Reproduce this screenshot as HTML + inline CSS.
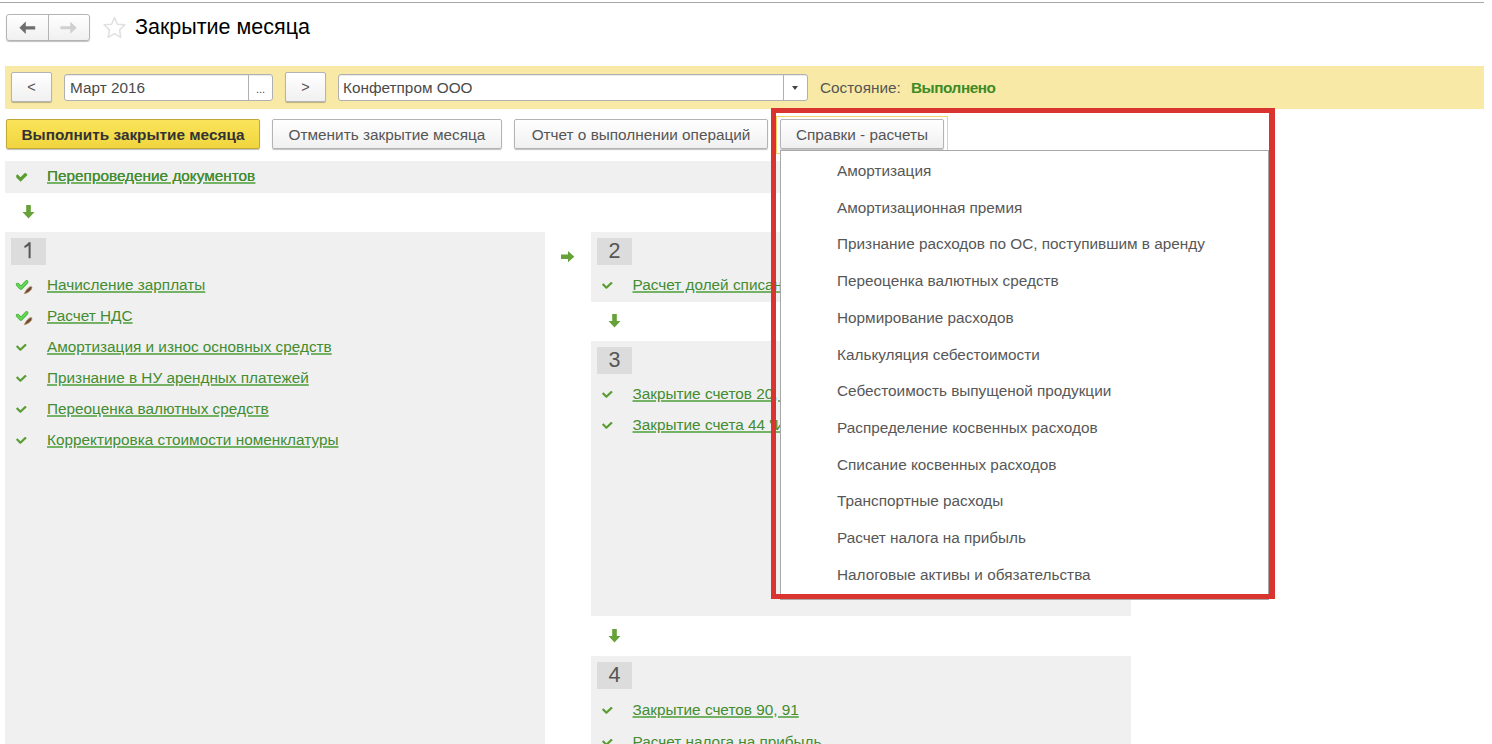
<!DOCTYPE html>
<html><head><meta charset="utf-8">
<style>
*{margin:0;padding:0;box-sizing:border-box}
html,body{width:1492px;height:744px;overflow:hidden;background:#fff}
body{position:relative;font-family:"Liberation Sans",sans-serif;font-size:15.33px;color:#555}
.a{position:absolute}
.t{position:absolute;white-space:nowrap;line-height:20px;height:20px}
.btn{position:absolute;border:1px solid #b4b4b4;border-radius:2px;background:linear-gradient(#ffffff,#f0f0f0);box-shadow:0 1px 1px rgba(0,0,0,.25)}
.fld{position:absolute;background:#fff;border:1px solid #b0b0b0;border-radius:3px;box-shadow:inset 0 1px 0 rgba(0,0,0,.08)}
.panel{position:absolute;background:#f0f0f0}
.num{position:absolute;width:35px;height:27px;background:#dcdcdc;color:#555;font-size:21.5px;line-height:27px;text-align:center}
.lnk{color:#438c30;text-decoration:underline;text-decoration-color:#74b266;text-decoration-thickness:2px;text-underline-offset:1px}
.mi{position:absolute;left:837px;color:#575757;white-space:nowrap;line-height:20px}
</style></head><body>

<!-- top line -->
<div class="a" style="left:0;top:2px;width:1484px;height:1px;background:#a6a6a6"></div>

<!-- nav buttons -->
<div class="btn" style="left:6px;top:14px;width:84px;height:27px;border-radius:3px"></div>
<div class="a" style="left:48px;top:14px;width:1px;height:27px;background:#b4b4b4"></div>
<svg class="a" style="left:19px;top:21px" width="17" height="14" viewBox="0 0 17 14"><path d="M0.4 6.7 L6.8 0.4 V5.2 H16.2 V8.4 H6.8 V12.9 Z" fill="#6e6e6e"/></svg>
<svg class="a" style="left:60px;top:21px" width="17" height="14" viewBox="0 0 17 14"><path d="M16.7 6.7 L10.3 0.7 V5.3 H0.4 V8.3 H10.3 V12.75 Z" fill="#cfcfcf"/></svg>
<svg class="a" style="left:100px;top:13px" width="30" height="30" viewBox="0 0 30 30"><path d="M14.5 4.6 L17.4 11.3 L24.9 11.8 L19.6 16.9 L20.8 24.3 L14.5 20.6 L8.2 24.3 L9.4 16.9 L4.1 11.8 L11.6 11.3 Z" fill="none" stroke="#e0e0e0" stroke-width="1.5" stroke-linejoin="round"/></svg>
<div class="t" style="left:135px;top:14px;font-size:21.5px;line-height:26px;height:26px;color:#000">Закрытие месяца</div>

<!-- yellow bar -->
<div class="a" style="left:5px;top:66px;width:1479px;height:43px;background:#f8eaa6"></div>
<div class="btn" style="left:11px;top:72px;width:41px;height:30px"></div>
<div class="t" style="left:11px;top:77px;width:41px;text-align:center;color:#555;font-size:14.5px">&lt;</div>
<div class="fld" style="left:64px;top:74px;width:209px;height:27px"></div>
<div class="a" style="left:248px;top:75px;width:1px;height:25px;background:#b0b0b0"></div>
<div class="t" style="left:70px;top:78px;color:#4a4a4a">Март 2016</div>
<div class="t" style="left:249px;top:79px;width:23px;text-align:center;color:#444;font-size:11px">...</div>
<div class="btn" style="left:285px;top:72px;width:41px;height:30px"></div>
<div class="t" style="left:285px;top:77px;width:41px;text-align:center;color:#555;font-size:14.5px">&gt;</div>
<div class="fld" style="left:338px;top:74px;width:470px;height:27px"></div>
<div class="a" style="left:783px;top:75px;width:1px;height:25px;background:#b0b0b0"></div>
<div class="t" style="left:343px;top:78px;color:#4a4a4a">Конфетпром ООО</div>
<div class="a" style="left:792px;top:86px;width:0;height:0;border-left:3.5px solid transparent;border-right:3.5px solid transparent;border-top:4px solid #444"></div>
<div class="t" style="left:820px;top:78px;color:#555">Состояние:</div>
<div class="t" style="left:911px;top:78px;color:#3e8a26;font-weight:bold;letter-spacing:-0.45px">Выполнено</div>

<!-- action buttons -->
<div class="a" style="left:6px;top:119px;width:254px;height:30px;border:1px solid #bfa73a;border-radius:2px;background:linear-gradient(#fae45a,#f0d53e);box-shadow:0 1px 1px rgba(0,0,0,.25)"></div>
<div class="t" style="left:6px;top:125px;width:254px;text-align:center;font-weight:bold;color:#333">Выполнить закрытие месяца</div>
<div class="btn" style="left:272px;top:119px;width:230px;height:30px"></div>
<div class="t" style="left:272px;top:125px;width:230px;text-align:center">Отменить закрытие месяца</div>
<div class="btn" style="left:514px;top:119px;width:254px;height:30px"></div>
<div class="t" style="left:514px;top:125px;width:254px;text-align:center">Отчет о выполнении операций</div>

<!-- band -->
<div class="panel" style="left:5px;top:161px;width:1126px;height:32px"></div>
<svg class="a" style="left:15px;top:171px" width="14" height="12" viewBox="0 0 14 12"><path d="M1.8 5.2 L5.6 9 L11.6 3" fill="none" stroke="#5a9e32" stroke-width="2.6"/></svg>
<div class="t" style="left:47px;top:166px"><span class="lnk">Перепроведение документов</span></div>

<svg class="a" style="left:22px;top:205px" width="13" height="14" viewBox="0 0 13 14"><path d="M4.2 0 H8.8 V7 H12.5 L6.5 13.5 L0.5 7 H4.2 Z" fill="#66a13a"/></svg>

<!-- panel 1 -->
<div class="panel" style="left:5px;top:232px;width:540px;height:520px"></div>
<div class="num" style="left:11px;top:238px"><svg style="position:absolute;left:0;top:0" width="35" height="27" viewBox="0 0 35 27"><path d="M17.6 4.2 H19.6 V20.2 H17.6 V7.4 Q15.9 8.9 13.4 9.9 V7.9 Q16.3 6.5 17.6 4.2 Z" fill="#555"/></svg></div>

<!-- panel 2 -->
<svg class="a" style="left:561.4px;top:251.3px" width="15" height="12" viewBox="0 0 15 12"><path d="M0 3.4 H7 V0 L13.3 5.65 L7 11.3 V7.9 H0 Z" fill="#66a13a"/></svg>
<div class="panel" style="left:591px;top:232px;width:540px;height:70px"></div>
<div class="num" style="left:597px;top:238px">2</div>

<svg class="a" style="left:608px;top:314px" width="13" height="14" viewBox="0 0 13 14"><path d="M4.2 0 H8.8 V7 H12.5 L6.5 13.5 L0.5 7 H4.2 Z" fill="#66a13a"/></svg>

<!-- panel 3 -->
<div class="panel" style="left:591px;top:341px;width:540px;height:275px"></div>
<div class="num" style="left:597px;top:347px">3</div>

<svg class="a" style="left:608px;top:629px" width="13" height="14" viewBox="0 0 13 14"><path d="M4.2 0 H8.8 V7 H12.5 L6.5 13.5 L0.5 7 H4.2 Z" fill="#66a13a"/></svg>

<!-- panel 4 -->
<div class="panel" style="left:591px;top:656px;width:540px;height:100px"></div>
<div class="num" style="left:597px;top:662px">4</div>

<svg class="a" style="left:15.0px;top:173px" width="13" height="10" viewBox="0 0 13 10"><path d="M1.7 1.9 L5.4 5.7 L11 0.4" fill="none" stroke="#5a9e32" stroke-width="2.2" stroke-linejoin="round"/></svg><div class="t" style="left:47px;top:166px"><span class="lnk">Перепроведение документов</span></div>
<svg class="a" style="left:15px;top:279px" width="19" height="16" viewBox="0 0 19 16"><path d="M2.6 5.6 L5.9 8.9 L11.6 2.9" fill="none" stroke="#3fb038" stroke-width="3.6" stroke-linecap="round" stroke-linejoin="round"/><path d="M2.6 5.6 L5.9 8.9 L11.6 2.9" fill="none" stroke="#66d856" stroke-width="2.1" stroke-linecap="round" stroke-linejoin="round"/><path d="M9.2 14.8 Q10.2 11.2 14.2 8.2 Q16.4 6.9 17.1 8.4 Q17 10.2 14.2 12.6 Q11.8 14.4 9.2 14.8 Z" fill="#6e4b2e" stroke="#b89066" stroke-width="0.7"/></svg><div class="t" style="left:47px;top:275px"><span class="lnk">Начисление зарплаты</span></div>
<svg class="a" style="left:15px;top:310px" width="19" height="16" viewBox="0 0 19 16"><path d="M2.6 5.6 L5.9 8.9 L11.6 2.9" fill="none" stroke="#3fb038" stroke-width="3.6" stroke-linecap="round" stroke-linejoin="round"/><path d="M2.6 5.6 L5.9 8.9 L11.6 2.9" fill="none" stroke="#66d856" stroke-width="2.1" stroke-linecap="round" stroke-linejoin="round"/><path d="M9.2 14.8 Q10.2 11.2 14.2 8.2 Q16.4 6.9 17.1 8.4 Q17 10.2 14.2 12.6 Q11.8 14.4 9.2 14.8 Z" fill="#6e4b2e" stroke="#b89066" stroke-width="0.7"/></svg><div class="t" style="left:47px;top:306px"><span class="lnk">Расчет НДС</span></div>
<svg class="a" style="left:15.0px;top:344px" width="13" height="10" viewBox="0 0 13 10"><path d="M1.7 1.9 L5.4 5.7 L11 0.4" fill="none" stroke="#5a9e32" stroke-width="2.2" stroke-linejoin="round"/></svg><div class="t" style="left:47px;top:337px"><span class="lnk">Амортизация и износ основных средств</span></div>
<svg class="a" style="left:15.0px;top:375px" width="13" height="10" viewBox="0 0 13 10"><path d="M1.7 1.9 L5.4 5.7 L11 0.4" fill="none" stroke="#5a9e32" stroke-width="2.2" stroke-linejoin="round"/></svg><div class="t" style="left:47px;top:368px"><span class="lnk">Признание в НУ арендных платежей</span></div>
<svg class="a" style="left:15.0px;top:406px" width="13" height="10" viewBox="0 0 13 10"><path d="M1.7 1.9 L5.4 5.7 L11 0.4" fill="none" stroke="#5a9e32" stroke-width="2.2" stroke-linejoin="round"/></svg><div class="t" style="left:47px;top:399px"><span class="lnk">Переоценка валютных средств</span></div>
<svg class="a" style="left:15.0px;top:437px" width="13" height="10" viewBox="0 0 13 10"><path d="M1.7 1.9 L5.4 5.7 L11 0.4" fill="none" stroke="#5a9e32" stroke-width="2.2" stroke-linejoin="round"/></svg><div class="t" style="left:47px;top:430px"><span class="lnk">Корректировка стоимости номенклатуры</span></div>
<svg class="a" style="left:600.5px;top:282px" width="13" height="10" viewBox="0 0 13 10"><path d="M1.7 1.9 L5.4 5.7 L11 0.4" fill="none" stroke="#5a9e32" stroke-width="2.2" stroke-linejoin="round"/></svg><div class="t" style="left:632.5px;top:275px"><span class="lnk">Расчет долей списания косвенных расходов</span></div>
<svg class="a" style="left:600.5px;top:391px" width="13" height="10" viewBox="0 0 13 10"><path d="M1.7 1.9 L5.4 5.7 L11 0.4" fill="none" stroke="#5a9e32" stroke-width="2.2" stroke-linejoin="round"/></svg><div class="t" style="left:632.5px;top:384px"><span class="lnk">Закрытие счетов 20, 23, 25, 26</span></div>
<svg class="a" style="left:600.5px;top:422px" width="13" height="10" viewBox="0 0 13 10"><path d="M1.7 1.9 L5.4 5.7 L11 0.4" fill="none" stroke="#5a9e32" stroke-width="2.2" stroke-linejoin="round"/></svg><div class="t" style="left:632.5px;top:415px"><span class="lnk">Закрытие счета 44 "Издержки обращения"</span></div>
<svg class="a" style="left:600.5px;top:707px" width="13" height="10" viewBox="0 0 13 10"><path d="M1.7 1.9 L5.4 5.7 L11 0.4" fill="none" stroke="#5a9e32" stroke-width="2.2" stroke-linejoin="round"/></svg><div class="t" style="left:632.5px;top:700px"><span class="lnk">Закрытие счетов 90, 91</span></div>
<svg class="a" style="left:600.5px;top:739px" width="13" height="10" viewBox="0 0 13 10"><path d="M1.7 1.9 L5.4 5.7 L11 0.4" fill="none" stroke="#5a9e32" stroke-width="2.2" stroke-linejoin="round"/></svg><div class="t" style="left:632.5px;top:732px"><span class="lnk">Расчет налога на прибыль</span></div>


<!-- dropdown -->
<div class="a" style="left:776px;top:116px;width:172px;height:38px;border:1px solid #f2d36a"></div>
<div class="btn" style="left:780px;top:119px;width:164px;height:30px"></div>
<div class="t" style="left:780px;top:125px;width:164px;text-align:center">Справки - расчеты</div>
<div class="a" style="left:780px;top:150px;width:489px;height:450px;background:#fff;border:1px solid #a8a8a8"></div>
<div class="mi" style="top:161px">Амортизация</div>
<div class="mi" style="top:198px">Амортизационная премия</div>
<div class="mi" style="top:234px">Признание расходов по ОС, поступившим в аренду</div>
<div class="mi" style="top:271px">Переоценка валютных средств</div>
<div class="mi" style="top:308px">Нормирование расходов</div>
<div class="mi" style="top:345px">Калькуляция себестоимости</div>
<div class="mi" style="top:381px">Себестоимость выпущеной продукции</div>
<div class="mi" style="top:418px">Распределение косвенных расходов</div>
<div class="mi" style="top:455px">Списание косвенных расходов</div>
<div class="mi" style="top:491px">Транспортные расходы</div>
<div class="mi" style="top:528px">Расчет налога на прибыль</div>
<div class="mi" style="top:565px">Налоговые активы и обязательства</div>


<!-- red frame -->
<div class="a" style="left:771px;top:108px;width:504px;height:491px;border:5px solid #da3431;border-right-width:6px"></div>
</body></html>
